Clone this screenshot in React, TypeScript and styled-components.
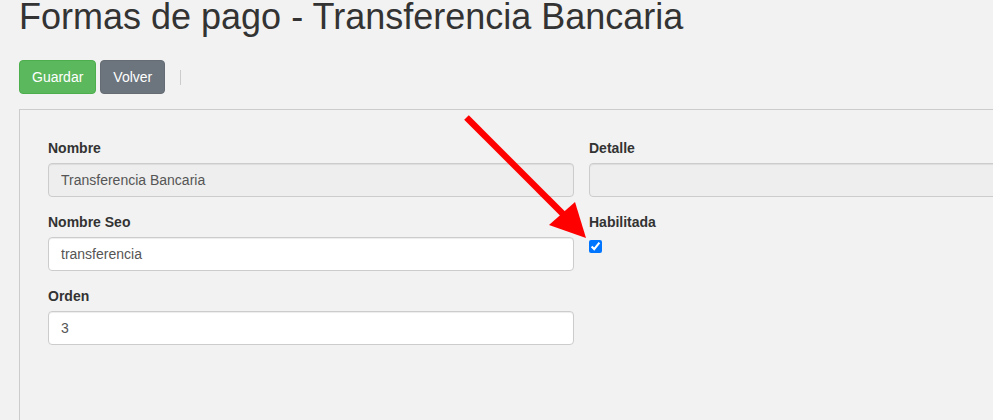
import React from 'react'
import styled, { createGlobalStyle } from 'styled-components'

const GlobalStyle = createGlobalStyle`
  html, body {
    margin: 0;
    padding: 0;
    background: #f2f2f2;
    overflow: hidden;
  }
  body {
    font-family: "Liberation Sans", Arial, Helvetica, sans-serif;
    font-size: 14px;
    line-height: 1.42857;
    color: #333;
  }
`;

// the screenshot is a crop of a wider page, so the view clips the panel
const Page = styled.div`
  position: relative;
  box-sizing: border-box;
  padding: 0 0 0 19px;
  width: 993px;
  height: 420px;
  overflow: hidden;
`;

const Title = styled.h1`
  margin: 0;
  font-size: 36px;
  font-weight: 400;
  line-height: 33px;
  color: #333;
  white-space: nowrap;
`;

const Toolbar = styled.div`
  display: flex;
  align-items: center;
  gap: 4px;
  margin-top: 27px;
`;

const Button = styled.button<{ $variant: 'success' | 'secondary' }>`
  font-family: inherit;
  font-size: 14px;
  line-height: 20px;
  padding: 6px 12px;
  height: 34px;
  border-radius: 4px;
  color: #fff;
  cursor: pointer;
  border: 1px solid ${(p) => (p.$variant === 'success' ? '#4cae4c' : '#656c74')};
  background-color: ${(p) => (p.$variant === 'success' ? '#5cb85c' : '#6c757d')};
`;

const Separator = styled.span`
  width: 1px;
  height: 15px;
  background: #ccc;
  margin-left: 11px;
`;

const Panel = styled.div`
  margin-top: 15px;
  width: 1125px;
  height: 400px;
  box-sizing: border-box;
  border: 1px solid #ccc;
  padding: 28px;
`;

const FormGrid = styled.div`
  display: grid;
  grid-template-columns: 526px 526px;
  column-gap: 15px;
`;

const Column = styled.div`
  display: flex;
  flex-direction: column;
`;

const FormGroup = styled.div`
  margin-bottom: 15px;
`;

const Label = styled.label`
  display: block;
  font-weight: bold;
  font-size: 14px;
  line-height: 20px;
  margin-bottom: 5px;
  color: #333;
`;

const Input = styled.input`
  display: block;
  width: 100%;
  height: 34px;
  box-sizing: border-box;
  padding: 6px 12px;
  font-family: inherit;
  font-size: 14px;
  line-height: 20px;
  color: #555;
  background-color: #fff;
  border: 1px solid #ccc;
  border-radius: 4px;
  box-shadow: inset 0 1px 1px rgba(0, 0, 0, 0.075);
  outline: none;

  &:disabled {
    background-color: #eee;
    color: #555;
    opacity: 1;
  }
`;

const Checkbox = styled.input`
  display: block;
  width: 13px;
  height: 13px;
  margin: 8px 0 0 0;
`;

const Arrow = styled.svg`
  position: absolute;
  left: 0;
  top: 0;
  pointer-events: none;
`;

const App = () => {
  return (
    <>
      <GlobalStyle />
      <Page>
        <Title>Formas de pago - Transferencia Bancaria</Title>
        <Toolbar>
          <Button $variant="success">Guardar</Button>
          <Button $variant="secondary">Volver</Button>
          <Separator />
        </Toolbar>
        <Panel>
          <FormGrid>
            <Column>
              <FormGroup>
                <Label>Nombre</Label>
                <Input type="text" value="Transferencia Bancaria" disabled readOnly />
              </FormGroup>
              <FormGroup>
                <Label>Nombre Seo</Label>
                <Input type="text" value="transferencia" readOnly />
              </FormGroup>
              <FormGroup>
                <Label>Orden</Label>
                <Input type="text" value="3" readOnly />
              </FormGroup>
            </Column>
            <Column>
              <FormGroup>
                <Label>Detalle</Label>
                <Input type="text" value="" disabled readOnly />
              </FormGroup>
              <FormGroup>
                <Label>Habilitada</Label>
                <Checkbox type="checkbox" checked readOnly />
              </FormGroup>
            </Column>
          </FormGrid>
        </Panel>
        {/* red annotation arrow pointing at the checkbox */}
        <Arrow width="993" height="420" viewBox="0 0 993 420">
          <line x1="466.5" y1="117.5" x2="566" y2="217" stroke="#ff0000" strokeWidth="6.5" />
          <polygon points="549,225 575,202 586,238" fill="#ff0000" />
        </Arrow>
      </Page>
    </>
  )
}

export default App
